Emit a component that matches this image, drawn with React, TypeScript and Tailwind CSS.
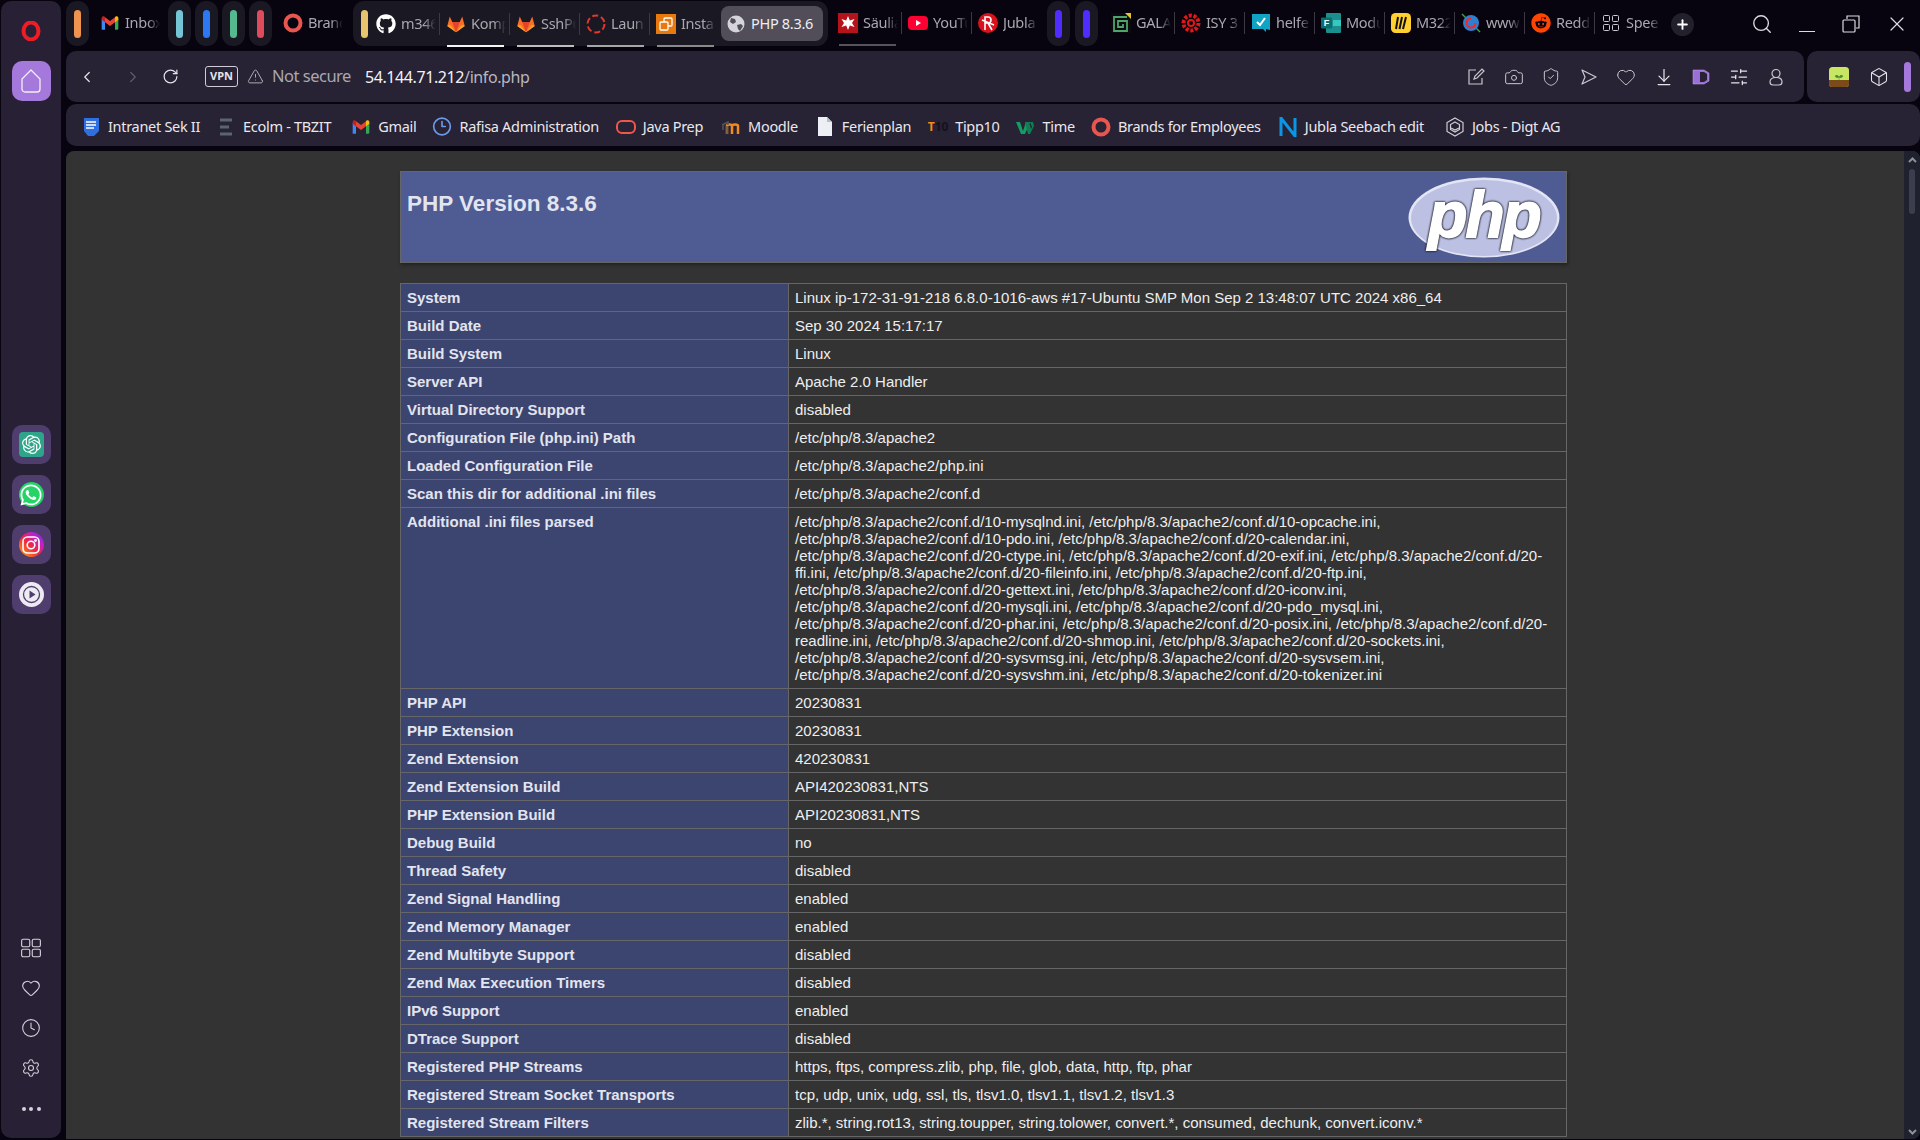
import React from "react";
import {
  ChevronLeft, ChevronRight, RotateCw, TriangleAlert, Search, X, Camera, ShieldCheck, Heart,
  ArrowDownToLine, SlidersHorizontal, Box, Clock, Settings, Plus, Clock3,
} from "lucide-react";
import { FaGithub, FaWhatsapp, FaReddit } from "react-icons/fa";
import { SiOpenai } from "react-icons/si";

const Gmail = ({ s = 20 }: { s?: number }) => (
  <svg width={s} height={s} viewBox="0 0 24 24">
    <path d="M2 20V7l4 3v10H3.500A1.500 1.500 0 0 1 2 20z" fill="#4285f4" />
    <path d="M22 20V7l-4 3v10h2.500a1.500 1.500 0 0 0 1.500-1.500z" fill="#34a853" />
    <path d="M18 5v6l4-3V6c0-2-2-2.600-3-2z" fill="#fbbc04" />
    <path d="M6 11V5l6 4.500L18 5v6l-6 4.500z" fill="#ea4335" />
    <path d="M2 6v2l4 3V5L5 4C4 3.400 2 4 2 6z" fill="#c5221f" />
  </svg>
);
const Gitlab = () => (
  <svg width="20" height="20" viewBox="0 0 24 24">
    <path d="M12 22 1.500 14.500 4.500 3 7.500 9.500h9L19.500 3l3 11.500z" fill="#fc6d26" />
    <path d="M12 22 7.500 9.500h9z" fill="#e24329" />
    <path d="M12 22 1.500 14.500l3.500-1.500z" fill="#fca326" />
    <path d="M12 22l10.500-7.500-3.500-1.500z" fill="#fca326" />
  </svg>
);
const Ring = ({ c = "#e8564f", s = 20 }: { c?: string; s?: number }) => (
  <svg width={s} height={s} viewBox="0 0 20 20">
    <circle cx="10" cy="10" r="7.500" fill="none" stroke={c} strokeWidth="4" />
  </svg>
);
const Launch = () => (
  <svg width="20" height="20" viewBox="0 0 20 20">
    <circle cx="10" cy="10" r="8.500" fill="none" stroke="#e8352b" strokeWidth="2" strokeDasharray="6 3" />
  </svg>
);
const Insta = () => (
  <svg width="20" height="20" viewBox="0 0 20 20">
    <rect width="20" height="20" fill="#e8790f" />
    <rect x="8" y="4" width="8" height="8" rx="1" fill="none" stroke="#fff" strokeWidth="1.300" />
    <rect x="4" y="8" width="8" height="8" rx="1" fill="#e8790f" stroke="#fff" strokeWidth="1.300" />
  </svg>
);
const Sauli = () => (
  <svg width="20" height="20" viewBox="0 0 20 20">
    <rect width="20" height="24" fill="#b5121b" />
    <path d="M10 3l1.800 4.500L16.500 6l-2.500 4 2.500 4-4.700-1.500L10 17l-1.800-4.500L3.500 14 6 10 3.500 6l4.700 1.500z" fill="#fff" />
  </svg>
);
const YouTube = () => (
  <svg width="20" height="20" viewBox="0 0 20 20">
    <rect y="3" width="20" height="14" rx="4" fill="#ff0033" />
    <path d="M8 7l5 3-5 3z" fill="#fff" />
  </svg>
);
const Jubla = () => (
  <svg width="20" height="20" viewBox="0 0 20 20">
    <circle cx="10" cy="10" r="10" fill="#d8131c" />
    <path d="M7 17V4h3a3 3 0 0 1 0 6H7m3 0l4 7M4 7l12 5" fill="none" stroke="#fff" strokeWidth="1.600" />
  </svg>
);
const Gala = () => (
  <svg width="20" height="20" viewBox="0 0 20 20">
    <rect width="20" height="20" fill="#0b0a0d" />
    <path d="M14 0h6v6z" fill="#e7c52a" />
    <path d="M16 4H3v14h13V8H7v6h5v-3" fill="none" stroke="#4fa56c" strokeWidth="1.800" />
  </svg>
);
const Isy = () => (
  <svg width="20" height="20" viewBox="0 0 20 20">
    <circle cx="10" cy="10" r="3" fill="none" stroke="#e01818" strokeWidth="2" />
    <circle cx="10" cy="10" r="7.500" fill="none" stroke="#e01818" strokeWidth="4" strokeDasharray="3 1.700" />
  </svg>
);
const Helfe = () => (
  <svg width="20" height="20" viewBox="0 0 20 20">
    <path d="M1 1h18v16l-4-1v3l-3-3H1z" fill="#0fa4c4" />
    <path d="M6 9l3 3 5-7" fill="none" stroke="#fff" strokeWidth="2" />
  </svg>
);
const Forms = () => (
  <svg width="20" height="20" viewBox="0 0 20 20">
    <rect x="5" width="15" height="20" rx="1" fill="#1b8f8e" />
    <rect x="12" y="7" width="8" height="6" fill="#37c6c0" />
    <rect y="4.500" width="11" height="11" rx="1" fill="#0a6e70" />
    <text x="5.500" y="13.300" textAnchor="middle" fill="#fff" fontSize="9" fontWeight="700" fontFamily="Liberation Sans">F</text>
  </svg>
);
const Miro = () => (
  <svg width="20" height="20" viewBox="0 0 20 20">
    <rect width="20" height="20" rx="4.500" fill="#ffd02f" />
    <path d="M7 4 5 16M11 4 8.500 16M15 4l-3 12" stroke="#111" strokeWidth="2" fill="none" />
  </svg>
);
const Www = () => (
  <svg width="20" height="20" viewBox="0 0 20 20">
    <path d="M1 1l18 18" stroke="#39a845" strokeWidth="1.500" />
    <circle cx="10" cy="10" r="8" fill="#2f7fd1" />
    <circle cx="10" cy="10" r="4.500" fill="none" stroke="#ef2a2a" strokeWidth="2.200" strokeDasharray="21 8" />
  </svg>
);
const SpeedDial = () => (
  <svg width="16" height="16" viewBox="0 0 16 16" fill="none" stroke="#c9c8cf" strokeWidth="1">
    <rect x=".5" y=".5" width="6" height="6" rx="1" />
    <rect x="9.500" y=".5" width="6" height="6" rx="1" />
    <rect x=".5" y="9.500" width="6" height="6" rx="1" />
    <rect x="9.500" y="9.500" width="6" height="6" rx="1" />
  </svg>
);
const PhpGlobe = () => (
  <svg width="18" height="18" viewBox="0 0 18 18">
    <circle cx="9" cy="9" r="8.500" fill="#d5d4da" />
    <path d="M4 3l4 1 1 3-3 2-3-2zM10 10l4-1 2 2-3 5-2-2z" fill="#514e5a" />
  </svg>
);

const Pill = ({ c }: { c: string }) => (
  <div className="w-[23px] h-[45px] mt-px rounded-[11px] bg-[#1a1822] flex items-center justify-center shrink-0">
    <div className="w-[7px] h-[28px] rounded-full" style={{ background: c }} />
  </div>
);

const Tab = ({ icon, label, sep = true, line }: { icon: React.ReactNode; label: string; sep?: boolean; line?: string }) => (
  <div className="relative w-[70px] h-[45px] shrink-0 flex items-center pl-[6px]">
    <div className="w-[20px] h-[20px] shrink-0 flex items-center justify-center">{icon}</div>
    <div className="ml-[5px] w-[35px] overflow-hidden whitespace-nowrap text-[14.500px] tracking-[-0.3px] text-[#a9a8ae] [mask-image:linear-gradient(to_right,black_65%,transparent)]">{label}</div>
    {sep && <div className="absolute right-0 top-[12px] h-[22px] w-px bg-[#3b3944]" />}
    {line && <div className="absolute left-[7px] top-[44px] h-[2px] w-[57px]" style={{ background: line }} />}
  </div>
);

const Mark = ({ icon, label, ml }: { icon: React.ReactNode; label: string; ml: number }) => (
  <div className="flex items-center shrink-0" style={{ marginLeft: ml }}>
    <div className="w-[20px] h-[20px] flex items-center justify-center">{icon}</div>
    <span className="ml-[7px] text-[14.500px] tracking-[-0.3px] text-[#e9e8ee] whitespace-nowrap">{label}</span>
  </div>
);

const SideBox = ({ children }: { children: React.ReactNode }) => (
  <div className="w-[39px] h-[39px] rounded-[10px] bg-[#4f3d6e] flex items-center justify-center">{children}</div>
);

const rows: [string, React.ReactNode][] = [
  ["System", "Linux ip-172-31-91-218 6.8.0-1016-aws #17-Ubuntu SMP Mon Sep 2 13:48:07 UTC 2024 x86_64"],
  ["Build Date", "Sep 30 2024 15:17:17"],
  ["Build System", "Linux"],
  ["Server API", "Apache 2.0 Handler"],
  ["Virtual Directory Support", "disabled"],
  ["Configuration File (php.ini) Path", "/etc/php/8.3/apache2"],
  ["Loaded Configuration File", "/etc/php/8.3/apache2/php.ini"],
  ["Scan this dir for additional .ini files", "/etc/php/8.3/apache2/conf.d"],
  ["Additional .ini files parsed", "/etc/php/8.3/apache2/conf.d/10-mysqlnd.ini, /etc/php/8.3/apache2/conf.d/10-opcache.ini, /etc/php/8.3/apache2/conf.d/10-pdo.ini, /etc/php/8.3/apache2/conf.d/20-calendar.ini, /etc/php/8.3/apache2/conf.d/20-ctype.ini, /etc/php/8.3/apache2/conf.d/20-exif.ini, /etc/php/8.3/apache2/conf.d/20-ffi.ini, /etc/php/8.3/apache2/conf.d/20-fileinfo.ini, /etc/php/8.3/apache2/conf.d/20-ftp.ini, /etc/php/8.3/apache2/conf.d/20-gettext.ini, /etc/php/8.3/apache2/conf.d/20-iconv.ini, /etc/php/8.3/apache2/conf.d/20-mysqli.ini, /etc/php/8.3/apache2/conf.d/20-pdo_mysql.ini, /etc/php/8.3/apache2/conf.d/20-phar.ini, /etc/php/8.3/apache2/conf.d/20-posix.ini, /etc/php/8.3/apache2/conf.d/20-readline.ini, /etc/php/8.3/apache2/conf.d/20-shmop.ini, /etc/php/8.3/apache2/conf.d/20-sockets.ini, /etc/php/8.3/apache2/conf.d/20-sysvmsg.ini, /etc/php/8.3/apache2/conf.d/20-sysvsem.ini, /etc/php/8.3/apache2/conf.d/20-sysvshm.ini, /etc/php/8.3/apache2/conf.d/20-tokenizer.ini"],
  ["PHP API", "20230831"],
  ["PHP Extension", "20230831"],
  ["Zend Extension", "420230831"],
  ["Zend Extension Build", "API420230831,NTS"],
  ["PHP Extension Build", "API20230831,NTS"],
  ["Debug Build", "no"],
  ["Thread Safety", "disabled"],
  ["Zend Signal Handling", "enabled"],
  ["Zend Memory Manager", "enabled"],
  ["Zend Multibyte Support", "disabled"],
  ["Zend Max Execution Timers", "disabled"],
  ["IPv6 Support", "enabled"],
  ["DTrace Support", "disabled"],
  ["Registered PHP Streams", "https, ftps, compress.zlib, php, file, glob, data, http, ftp, phar"],
  ["Registered Stream Socket Transports", "tcp, udp, unix, udg, ssl, tls, tlsv1.0, tlsv1.1, tlsv1.2, tlsv1.3"],
  ["Registered Stream Filters", "zlib.*, string.rot13, string.toupper, string.tolower, convert.*, consumed, dechunk, convert.iconv.*"],
];

const toolIcon = "text-[#c9c8cf] shrink-0";

export default function App() {
  return (
    <div className="w-[1920px] h-[1140px] overflow-hidden bg-[#07030f] flex font-['Noto_Sans',sans-serif]">
      <aside className="ml-px mt-px mb-[2px] w-[60px] rounded-[10px] bg-[#282136] flex flex-col items-center shrink-0">
        <svg className="mt-[20px]" width="20" height="20" viewBox="0 0 20 20">
          <ellipse cx="10" cy="10" rx="7.500" ry="8.500" fill="none" stroke="#ee1c25" strokeWidth="4" />
        </svg>
        <div className="mt-[20px] w-[39px] h-[40px] rounded-[10px] bg-[#a578db] flex items-center justify-center">
          <svg width="20" height="24" viewBox="0 0 20 24" fill="none" stroke="#f3eefa" strokeWidth="1.300">
            <path d="M1 10 10 1l9 9v10a3 3 0 0 1-3 3H4a3 3 0 0 1-3-3z" strokeLinejoin="round" />
          </svg>
        </div>
        <div className="mt-[324px] flex flex-col gap-[11px]">
          <SideBox>
            <div className="w-[25px] h-[25px] rounded-[4px] bg-[#2ea488] flex items-center justify-center text-white"><SiOpenai size={19} /></div>
          </SideBox>
          <SideBox>
            <div className="relative w-[25px] h-[25px] rounded-full bg-[#25d366] flex items-center justify-center text-white"><FaWhatsapp size={24} /></div>
          </SideBox>
          <SideBox>
            <div className="w-[25px] h-[25px] rounded-full bg-[linear-gradient(to_top_right,#fdb00f,#f0283e_45%,#c71fc0_70%,#5a38e0)] flex items-center justify-center">
              <svg width="18" height="18" viewBox="0 0 18 18" fill="none" stroke="#fff" strokeWidth="1.600">
                <rect x="1" y="1" width="16" height="16" rx="4.500" />
                <circle cx="9" cy="9" r="3.800" />
                <circle cx="13.500" cy="4.500" r=".6" fill="#fff" />
              </svg>
            </div>
          </SideBox>
          <SideBox>
            <div className="w-[25px] h-[25px] rounded-full bg-[#eeeaf2] flex items-center justify-center">
              <svg width="19" height="19" viewBox="0 0 19 19" fill="none" stroke="#4f3d6e" strokeWidth="1.300">
                <circle cx="9.500" cy="9.500" r="8" />
                <path d="M7.500 5.500l6 4-6 4z" fill="#4f3d6e" stroke="none" />
              </svg>
            </div>
          </SideBox>
        </div>
        <div className="mt-auto mb-[27px] flex flex-col items-center gap-[20px] text-[#d3d1d9]">
          <svg width="20" height="20" viewBox="0 0 16 16" fill="none" stroke="currentColor" strokeWidth=".9">
            <rect x=".5" y="1" width="6.500" height="6" rx="1.200" /><rect x="9" y="1" width="6.500" height="6" rx="1.200" />
            <rect x=".5" y="9" width="6.500" height="6" rx="1.200" /><rect x="9" y="9" width="6.500" height="6" rx="1.200" />
          </svg>
          <Heart size={20} strokeWidth={1.300} />
          <Clock size={20} strokeWidth={1.300} />
          <Settings size={20} strokeWidth={1.300} />
          <div className="mt-[9px] h-[4px] flex gap-[3.500px]">
            <i className="w-[4px] h-[4px] rounded-full bg-[#d3d1d9]" /><i className="w-[4px] h-[4px] rounded-full bg-[#d3d1d9]" /><i className="w-[4px] h-[4px] rounded-full bg-[#d3d1d9]" />
          </div>
        </div>
      </aside>

      <div className="ml-[5px] flex-1 min-w-0 flex flex-col">
        <div className="h-[51px] shrink-0 flex items-start">
          <Pill c="#ee9350" />
          <div className="ml-[5px]"><Tab icon={<Gmail />} label="Inbox" sep={false} /></div>
          <div className="ml-[4px] flex gap-[4px]">
            <Pill c="#74c6d6" /><Pill c="#2c78f2" /><Pill c="#55b98f" /><Pill c="#df4a5c" />
          </div>
          <div className="ml-[5px]"><Tab icon={<Ring />} label="Branc" sep={false} /></div>
          <div className="ml-[6px] mt-px w-[475px] h-[45px] rounded-[11px] bg-[#1a1822] flex items-center shrink-0">
            <div className="ml-[8px] w-[7px] h-[28px] rounded-full bg-[#e9c46e] shrink-0" />
            <div className="ml-[2px] flex items-center">
              <Tab icon={<FaGithub size={20} color="#fff" />} label="m346" />
              <Tab icon={<Gitlab />} label="Komp" line="#f4f4f4" />
              <Tab icon={<Gitlab />} label="SshPu" line="#bdbdbd" />
              <Tab icon={<Launch />} label="Laun" line="#a6a6a6" />
              <Tab icon={<Insta />} label="Insta" sep={false} line="#8a8a8a" />
            </div>
            <div className="ml-[1px] w-[102px] h-[35px] rounded-[8px] bg-[#514e5a] flex items-center shrink-0 pl-[6px]">
              <PhpGlobe />
              <span className="ml-[6px] text-[14.500px] tracking-[-0.3px] text-[#eeedf2] whitespace-nowrap">PHP 8.3.6</span>
            </div>
          </div>
          <div className="ml-[4px] flex">
            <Tab icon={<Sauli />} label="Säulia" line="#55535c" />
            <Tab icon={<YouTube />} label="YouTu" />
            <Tab icon={<Jubla />} label="Jubla" sep={false} />
          </div>
          <div className="ml-[5px] flex gap-[5px]"><Pill c="#4f2cff" /><Pill c="#4f2cff" /></div>
          <div className="ml-[7px] flex">
            <Tab icon={<Gala />} label="GALA" />
            <Tab icon={<Isy />} label="ISY 3" />
            <Tab icon={<Helfe />} label="helfe" />
            <Tab icon={<Forms />} label="Modu" />
            <Tab icon={<Miro />} label="M322" />
            <Tab icon={<Www />} label="www." />
            <Tab icon={<FaReddit size={20} color="#ff4500" />} label="Redd" />
            <Tab icon={<SpeedDial />} label="Spee" sep={false} />
          </div>
          <div className="ml-[6px] mt-[13px] w-[23px] h-[23px] rounded-full bg-[#22202a] flex items-center justify-center shrink-0">
            <Plus size={15} strokeWidth={3} color="#fff" />
          </div>
          <div className="ml-[57px] mt-[13px] text-[#dcdbe0]"><Search size={22} strokeWidth={1.500} /></div>
          <div className="ml-[26px] mt-[31px] w-[16px] h-px bg-[#dcdbe0]" />
          <svg className="ml-[27px] mt-[15px]" width="18" height="18" viewBox="0 0 18 18" fill="none" stroke="#dcdbe0" strokeWidth="1.200">
            <path d="M5 4V1h12v12h-3" /><rect x="1" y="5" width="12" height="12" rx="1" />
          </svg>
          <div className="ml-[25px] mt-[12px] text-[#dcdbe0]"><X size={24} strokeWidth={1.200} /></div>
        </div>

        <div className="h-[51px] shrink-0 flex">
          <div className="w-[1738px] rounded-[10px] bg-[#272234] flex items-center shrink-0">
            <ChevronLeft className="ml-[12px] text-[#e5e4ea]" size={18} strokeWidth={1.600} />
            <ChevronRight className="ml-[28px] text-[#5f5c6b]" size={18} strokeWidth={1.600} />
            <RotateCw className="ml-[20px] text-[#e5e4ea]" size={17} strokeWidth={1.700} />
            <div className="ml-[26px] w-[33px] h-[21px] border border-[#cfced6] rounded-[3px] flex items-center justify-center text-[11px] font-bold text-[#e5e4ea]">VPN</div>
            <TriangleAlert className="ml-[9px] text-[#b9b8bf]" size={17} strokeWidth={1.300} />
            <span className="ml-[8px] text-[16.500px] tracking-[-0.5px] text-[#a9a8ae] whitespace-nowrap">Not secure</span>
            <span className="ml-[14px] text-[16px] tracking-[-0.4px] whitespace-nowrap"><span className="text-[#f4f3f7]">54.144.71.212</span><span className="text-[#b9b8bf]">/info.php</span></span>
            <div className="ml-auto mr-[18px] flex items-center gap-[17.500px]">
              <svg className={toolIcon} width="20" height="20" viewBox="0 0 20 20" fill="none" stroke="currentColor" strokeWidth="1.200">
                <path d="M10 3H3v14h13v-6" /><path d="M8 12l1-3 7-7 2 2-7 7z" />
              </svg>
              <Camera className={toolIcon} size={20} strokeWidth={1.200} />
              <ShieldCheck className={toolIcon} size={20} strokeWidth={1.200} />
              <svg className={toolIcon} width="20" height="20" viewBox="0 0 20 20" fill="none" stroke="currentColor" strokeWidth="1.200">
                <path d="M3 3l14 7-14 7 3-7z" strokeLinejoin="round" />
              </svg>
              <Heart className={toolIcon} size={20} strokeWidth={1.200} />
              <ArrowDownToLine className="text-[#e5e4ea] shrink-0" size={20} strokeWidth={1.500} />
              <svg className="shrink-0" width="20" height="20" viewBox="0 0 20 20">
                <path d="M2 3h11l5 3v8l-5 3H2z" fill="#9c6fd6" stroke="#c9a8ee" strokeWidth=".5" />
                <path d="M9 5h4l3 2v6l-3 2H9z" fill="#272234" />
              </svg>
              <SlidersHorizontal className="text-[#e5e4ea] shrink-0" size={20} strokeWidth={1.500} />
              <svg className={toolIcon} width="20" height="20" viewBox="0 0 20 20" fill="none" stroke="currentColor" strokeWidth="1.200">
                <circle cx="10" cy="6.500" r="4" /><path d="M10 10.500c-4 0-6 2-6 4.500 0 1.500 1 3 3 3h6c2 0 3-1.500 3-3 0-2.500-2-4.500-6-4.500z" />
              </svg>
            </div>
          </div>
          <div className="ml-[3px] flex-1 rounded-[10px] bg-[#272234] flex items-center">
            <svg className="ml-[22px]" width="20" height="20" viewBox="0 0 20 20">
              <rect width="20" height="20" rx="3.500" fill="#c9e564" />
              <path d="M0 13h20v4a3 3 0 0 1-3 3H3a3 3 0 0 1-3-3z" fill="#7a4a18" />
              <path d="M10 13V10M10 10c-1-2-3-2-4-1 1 2 3 2 4 1zM10 10c1-2 3-2 4-1-1 2-3 2-4 1z" fill="#3f8f2f" stroke="#3f8f2f" strokeWidth=".5" />
            </svg>
            <Box className="ml-[20px] text-[#e5e4ea]" size={20} strokeWidth={1.300} />
            <div className="ml-[15px] w-[7px] h-[30px] rounded-full bg-[#a578db]" />
          </div>
        </div>

        <div className="mt-[2px] pt-[3px] h-[42px] shrink-0 rounded-[10px] bg-[#272234] flex items-center">
          <Mark ml={15} label="Intranet Sek II" icon={<svg width="17" height="20" viewBox="0 0 17 20"><path d="M1 1h15v13l-5 5H5l-4-5z" fill="#2f6fe0" /><path d="M3 5h10M3 8h10M3 11h8" stroke="#fff" strokeWidth="1.300" /></svg>} />
          <Mark ml={16} label="Ecolm - TBZIT" icon={<svg width="14" height="20" viewBox="0 0 14 20"><path d="M1 3h12M1 10h9M1 17h12" stroke="#5a6472" strokeWidth="3" /></svg>} />
          <Mark ml={20} label="Gmail" icon={<Gmail />} />
          <Mark ml={16} label="Rafisa Administration" icon={<Clock3 size={21} color="#6c9ae8" strokeWidth={2} />} />
          <Mark ml={17} label="Java Prep" icon={<svg width="20" height="14" viewBox="0 0 20 14"><rect x="1" y="1" width="18" height="12" rx="5" fill="none" stroke="#f0574a" strokeWidth="2" /></svg>} />
          <Mark ml={18} label="Moodle" icon={<svg width="20" height="16" viewBox="0 0 20 16" fill="none"><path d="M6 15V7c0-2 5-2 5 0v8M11 15V7c0-2 6-2 6 0v8" stroke="#f28a1c" strokeWidth="2.500" /><path d="M1 6l6-3v3M2 6v5M6 7v8" stroke="#555" strokeWidth="1.500" /></svg>} />
          <Mark ml={17} label="Ferienplan" icon={<svg width="14" height="19" viewBox="0 0 14 19"><path d="M0 0h9l5 5v14H0z" fill="#eceff3" /><path d="M9 0l5 5H9z" fill="#b9bec6" /></svg>} />
          <Mark ml={17} label="Tipp10" icon={<span className="text-[12px] font-bold leading-none"><span className="text-[#f28a1c]">T</span><span className="text-[#14121a]">10</span></span>} />
          <Mark ml={16} label="Time" icon={<svg width="20" height="16" viewBox="0 0 20 16"><path d="M0 3h4l3 9 3-9h4l-5 12H5z" fill="#159c66" /><path d="M9 3h4l2 7 1-2-2-5h3l1 4-4 8h-2z" fill="#0f7f52" /></svg>} />
          <Mark ml={16} label="Brands for Employees" icon={<Ring />} />
          <Mark ml={17} label="Jubla Seebach edit" icon={<svg width="18" height="20" viewBox="0 0 18 20"><path d="M2 19V1l14 18V1" fill="none" stroke="#0e94e4" strokeWidth="3" /></svg>} />
          <Mark ml={21} label="Jobs - Digt AG" icon={<svg width="18" height="20" viewBox="0 0 18 20" fill="none" stroke="#cfced6" strokeWidth="1.200"><path d="M9 1l8 4.500v9L9 19l-8-4.500v-9z" /><path d="M9 5l4.500 2.500v5L9 15l-4.500-2.500v-5z" /><path d="M5 11l4 2 4-2" /></svg>} />
        </div>

        <main className="mt-[5px] mb-px flex-1 min-h-0 rounded-tl-[8px] rounded-br-[8px] rounded-tr-[8px] bg-[#333333] flex overflow-hidden">
          <div className="flex-1 min-w-0 pt-[20px] overflow-hidden font-['Liberation_Sans',sans-serif] text-[15px] leading-[17px] text-[#eeeeee]">
            <div className="ml-[334px] w-[1167px]">
              <div className="relative h-[92px] bg-[#4f5b93] border border-[#666666] shadow-[1px_2px_3px_#222222] px-[6px]">
                <h1 className="mt-[19px] text-[22.500px] leading-[26px] font-bold text-[#e2e4ef]">PHP Version 8.3.6</h1>
                <svg className="absolute right-[6px] top-[5px]" width="152" height="81" viewBox="0 0 152 81">
                  <ellipse cx="76" cy="40.500" rx="75.500" ry="40" fill="#e3e5f4" />
                  <ellipse cx="76" cy="41" rx="73" ry="38" fill="#bcc0e2" />
                  <text x="76" y="60" textAnchor="middle" fontFamily="Liberation Sans" fontSize="64" fontStyle="italic" fontWeight="700" fill="#ffffff" stroke="#ffffff" strokeWidth="1.800" letterSpacing="-2" className="[filter:drop-shadow(0_0_1px_#1c1f2c)_drop-shadow(0_0_0.5px_#1c1f2c)]">php</text>
                </svg>
              </div>
              <table className="mt-[20px] w-[1167px] table-fixed border-collapse">
                <colgroup><col className="w-[388px]" /><col /></colgroup>
                <tbody>
                  {rows.map(([k, v]) => (
                    <tr key={k}>
                      <td className="border border-[#666666] bg-[#3c4570] px-[6px] py-[5px] align-top font-bold text-[#e2e4ef]">{k}</td>
                      <td className="border border-[#666666] px-[6px] py-[5px] align-top break-words">{v}</td>
                    </tr>
                  ))}
                </tbody>
              </table>
            </div>
          </div>
          <div className="w-[16px] shrink-0 bg-[#20212f] flex flex-col items-center">
            <svg className="mt-[6px]" width="9" height="6" viewBox="0 0 9 6"><path d="M1 5l3.500-3.500L8 5" fill="none" stroke="#8f8f96" strokeWidth="2" /></svg>
            <div className="mt-[6px] w-[6px] h-[45px] rounded-full bg-[#3c3d4d]" />
            <svg className="mt-auto mb-[4px]" width="9" height="6" viewBox="0 0 9 6"><path d="M1 1l3.500 3.500L8 1" fill="none" stroke="#8f8f96" strokeWidth="2" /></svg>
          </div>
        </main>
      </div>
    </div>
  );
}
